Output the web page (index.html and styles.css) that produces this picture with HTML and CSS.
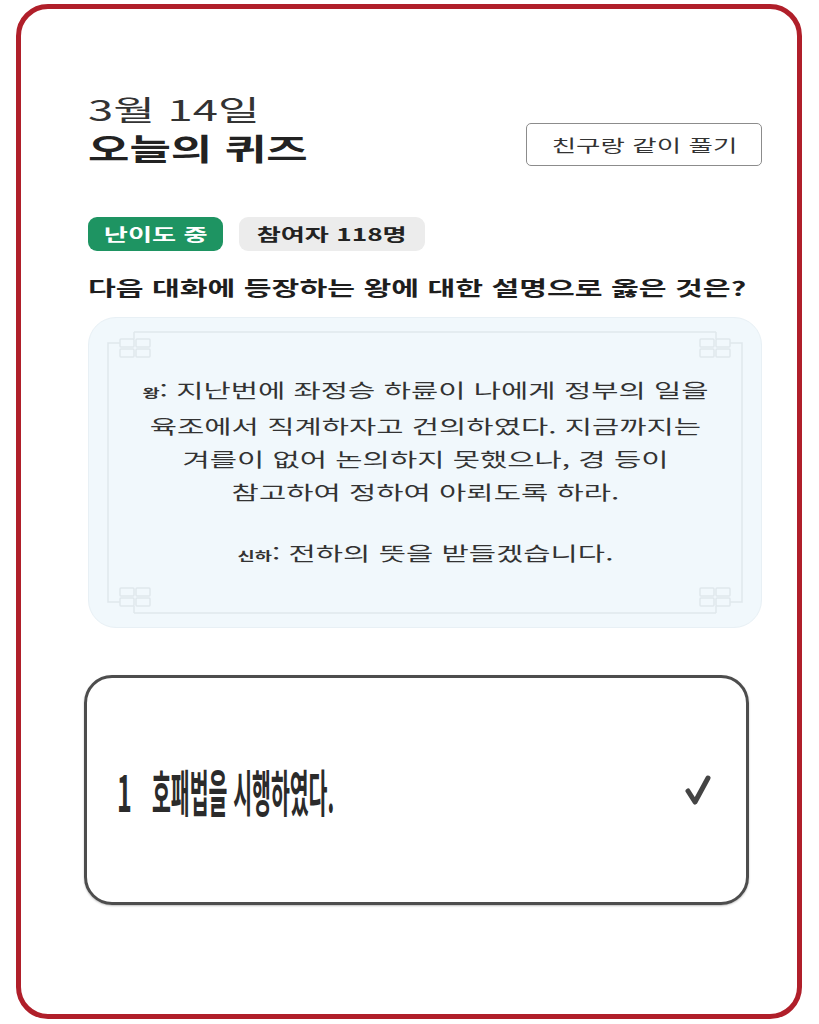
FILE: index.html
```html
<!DOCTYPE html>
<html lang="ko">
  <head>
    <meta charset="UTF-8" />
    <meta name="viewport" content="width=device-width, initial-scale=1.0" />
    <link rel="stylesheet" href="styles.css">
  </head>
  <body>
    <div class="frame">
      <div class="head">
        <div>
          <p class="date">3월 14일</p>
          <h1 class="title">오늘의 퀴즈</h1>
        </div>
        <button class="friend-btn"><span>친구랑 같이 풀기</span></button>
      </div>

      <div class="badges">
        <span class="badge badge-level"><span>난이도 중</span></span>
        <span class="badge badge-count"><span>참여자 118명</span></span>
      </div>

      <h2 class="question">다음 대화에 등장하는 왕에 대한 설명으로 옳은 것은?</h2>

      <div class="passage">
        <!-- corner knots + thin inner frame -->
        <svg class="passage-frame" width="674" height="311" viewBox="0 0 674 311">
          <g fill="none" stroke="#dfe7ec" stroke-width="1.5">
            <path d="M46 15 H628 M20 32 V279 M654 32 V279 M46 296 H628" />
            <g id="knot">
              <path d="M20 32 V26 H32 M46 15 V22" />
              <rect x="32" y="22" width="14" height="8" rx="1" />
              <rect x="48" y="22" width="14" height="8" rx="1" />
              <rect x="32" y="32" width="14" height="8" rx="1" />
              <rect x="48" y="32" width="14" height="8" rx="1" />
            </g>
            <use href="#knot" transform="translate(674 0) scale(-1 1)" />
            <use href="#knot" transform="translate(0 311) scale(1 -1)" />
            <use href="#knot" transform="translate(674 311) scale(-1 -1)" />
          </g>
        </svg>
        <p class="line">
          <b class="who">왕</b>: 지난번에 좌정승 하륜이 나에게 정부의 일을<br />
          육조에서 직계하자고 건의하였다. 지금까지는<br />
          겨를이 없어 논의하지 못했으나, 경 등이<br />
          참고하여 정하여 아뢰도록 하라.
        </p>
        <p class="line reply"><b class="who">신하</b>: 전하의 뜻을 받들겠습니다.</p>
      </div>

      <div class="answer">
        <div class="answer-body">
          <span class="answer-num">1</span>
          <span class="answer-text">호패법을 시행하였다.</span>
        </div>
        <svg class="check" width="28" height="32" viewBox="0 0 28 32">
          <path d="M4 17 L11 28 L24 4" fill="none" stroke="#444" stroke-width="5" stroke-linecap="round" stroke-linejoin="round" />
        </svg>
      </div>
    </div>
  </body>
</html>
```

FILE: styles.css
```css
* {
  margin: 0;
  padding: 0;
  box-sizing: border-box;
}

body {
  font-family: "Noto Sans CJK KR", "Noto Sans", sans-serif;
  background: white;
  color: #333;
}

.frame {
  margin: 4px 17px 5px 16px;
  height: 1015px;
  border: 5px solid #b01f2a;
  border-radius: 32px;
  padding: 82px 35px 0 67px;
}

.head {
  display: flex;
  justify-content: space-between;
  align-items: flex-end;
}

/* the type on this card is set wide */
.date,
.title,
.question {
  width: fit-content;
  transform-origin: left center;
}

.date {
  font-size: 28px;
  line-height: 36px;
  font-weight: 400;
  color: #333;
  transform: scaleX(1.62);
}

.title {
  font-size: 30px;
  line-height: 40px;
  font-weight: 700;
  color: #222;
  transform: scaleX(1.5);
}

.friend-btn {
  width: 236px;
  height: 43px;
  border: 1px solid #8c8c8c;
  border-radius: 5px;
  background: white;
  color: #333;
  font-family: inherit;
  font-size: 17px;
  margin-bottom: 1px;
}

.friend-btn span {
  display: inline-block;
  transform: scaleX(1.56);
}

.badges {
  display: flex;
  gap: 16px;
  margin-top: 50px;
}

.badge {
  height: 34px;
  line-height: 34px;
  border-radius: 9px;
  font-size: 17px;
  font-weight: 700;
  text-align: center;
}

.badge span {
  display: inline-block;
  transform: scaleX(1.54);
}

.badge-level {
  width: 135px;
  background: #1e9462;
  color: white;
}

.badge-count {
  width: 186px;
  background: #ececec;
  color: #222;
}

.question {
  margin-top: 23px;
  font-size: 20px;
  line-height: 28px;
  font-weight: 700;
  color: #1e1e1e;
  transform: scaleX(1.51);
}

.passage {
  position: relative;
  margin-top: 15px;
  height: 311px;
  background: #f1f8fc;
  border: 1px solid #e8f0f5;
  border-radius: 28px;
  padding-top: 55px;
  text-align: center;
  font-size: 19px;
  line-height: 33px;
  color: #333;
}

.passage-frame {
  position: absolute;
  top: -1px;
  left: -1px;
}

.line {
  width: fit-content;
  margin: 0 auto;
  transform: scaleX(1.56);
}

.reply {
  margin-top: 28px;
}

.who {
  font-size: 12px;
  font-weight: 700;
}

.answer {
  margin-top: 47px;
  margin-left: -4px;
  width: 665px;
  height: 230px;
  border: 3px solid #4d4d4d;
  border-radius: 28px;
  box-shadow: 0 1px 2px rgba(0, 0, 0, 0.25);
  display: flex;
  align-items: center;
  justify-content: space-between;
  padding: 0 34px 0 30px;
}

.answer-body {
  display: flex;
  align-items: center;
  gap: 22px;
  font-size: 50px;
  line-height: 60px;
  font-weight: 700;
  color: #2b2b2b;
  white-space: nowrap;
}

.answer-num,
.answer-text {
  display: inline-block;
  transform-origin: left center;
}

.answer-num {
  width: 13px;
  transform: scaleX(0.5);
}

.answer-text {
  width: 181px;
  transform: scaleX(0.41);
}

.check {
  display: block;
}
```
